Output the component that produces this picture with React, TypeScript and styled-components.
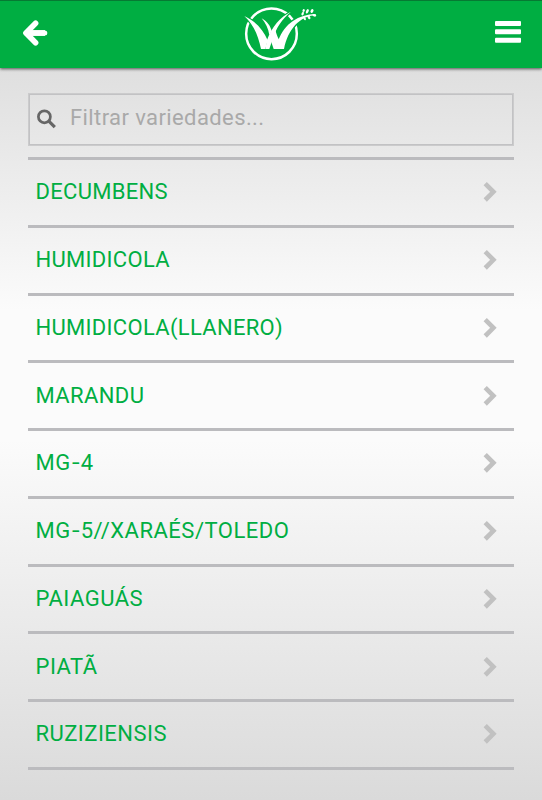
import React from "react";
import styled, { createGlobalStyle } from "styled-components";

const GlobalStyle = createGlobalStyle`
  * { box-sizing: border-box; }
  body { margin: 0; font-family: Roboto, "Liberation Sans", sans-serif; }
`;

const Screen = styled.div`
  display: flex;
  flex-direction: column;
  height: 800px;
  overflow: hidden;
  background: linear-gradient(to bottom, #dfdfdf 68px, #fbfbfb 310px, #fbfbfb 440px, #dadada 800px);
`;

const Header = styled.header`
  display: flex;
  flex: none;
  align-items: flex-start;
  justify-content: space-between;
  height: 68px;
  padding: 0 21px 0 22px;
  background: #00ae42;
  border-top: 1px solid #067a33;
  box-shadow: 0 1px 3px rgba(0, 0, 0, 0.65);
`;

const IconButton = styled.button`
  display: flex;
  padding: 18px 0 0;
  border: 0;
  background: none;
  color: #fff;
`;

const Logo = styled.svg`
  display: block;
  margin-left: 16px;
`;

const Content = styled.main`
  padding: 25px 28px 0;
`;

const Search = styled.label`
  display: flex;
  align-items: center;
  height: 53px;
  padding: 0 8px;
  border: 1px solid #cbcbcc;
  box-shadow: inset 0 0 0 1px #c2c2c4;
  color: #666;
`;

const SearchIcon = styled.svg`
  display: block;
  margin-bottom: 2px;
`;

const SearchInput = styled.input`
  flex: 1;
  min-width: 0;
  height: 30px;
  margin: 0 0 5px 14px;
  padding: 0;
  border: 0;
  outline: 0;
  background: none;
  color: #666;
  font: 400 22px Roboto, sans-serif;
  letter-spacing: 0.4px;
  &::placeholder { color: #a9a9a9; opacity: 1; }
`;

const List = styled.ul`
  margin: 11px 0 0;
  padding: 0;
  list-style: none;
  border-top: 3px solid #bbbbbe;
`;

const Row = styled.li`
  display: flex;
  align-items: center;
  justify-content: space-between;
  height: 67.75px;
  padding: 0 17px 0 7.5px;
  border-bottom: 3px solid #bbbbbe;
  color: #00ae42;
`;

const Name = styled.span<{ $tracking?: number }>`
  font-size: 22px;
  line-height: 26px;
  letter-spacing: ${({ $tracking = 0.3 }) => $tracking}px;
`;

const Hyphen = styled.span`
  display: inline-block;
  width: 10px;
  text-align: center;
  transform: scaleX(1.25);
`;

const Chevron = styled.svg`
  display: block;
`;

const varieties: { name: string; tracking?: number }[] = [
  { name: "DECUMBENS" },
  { name: "HUMIDICOLA" },
  { name: "HUMIDICOLA(LLANERO)" },
  { name: "MARANDU", tracking: 0.4 },
  { name: "MG-4", tracking: 0.5 },
  { name: "MG-5//XARAÉS/TOLEDO", tracking: 0.5 },
  { name: "PAIAGUÁS", tracking: 0.5 },
  { name: "PIATÃ", tracking: 0.5 },
  { name: "RUZIZIENSIS", tracking: 0.45 },
];

const BackIcon = () => (
  <svg width="26" height="28" viewBox="0 0 26 28" fill="none" stroke="currentColor">
    <path d="M13.6 4.3 4 14l9.6 9.7" strokeWidth="5.6" strokeLinecap="round" strokeLinejoin="round" />
    <path d="M5 14h18" strokeWidth="5.8" />
    <path d="M4 14h18.8" strokeWidth="5" strokeLinecap="round" />
  </svg>
);

const MenuIcon = () => (
  <svg width="26" height="26" viewBox="0 0 26 26" fill="currentColor">
    <rect y="2" width="26" height="5" rx="1" />
    <rect y="10.3" width="26" height="5" rx="1" />
    <rect y="18.8" width="26" height="5" rx="1" />
  </svg>
);

const leaves = [
  "M28 48C62 64 84 88 98 121L91 147H78C69 104 55 73 28 48Z",
  "M168 35C135 52 112 78 96 120L91 147H103L113 117C125 81 141 57 168 35Z",
  "M242 42C190 44 150 69 130 121L124 147H147C159 88 193 49 242 45Z",
];

const BrandLogo = () => (
  <Logo width="90" height="66" viewBox="0 3 270 198" fill="#fff">
    <circle cx="109.5" cy="101.5" r="76" fill="none" stroke="#fff" strokeWidth="7.5" />
    {leaves.map((d) => <path key={d} d={d} fill="none" stroke="#00ae42" strokeWidth="7" />)}
    {leaves.map((d) => <path key={d} d={d} />)}
    <path d="m112 103 9-14c3 12 7 24 12 31l4 27h-21l-9-26Z" />
    <path d="M80 55C96 64 107 78 110 94L103 105C100 86 92 69 80 55Z" />
    <g>
      <ellipse cx="203" cy="41" rx="5.5" ry="3.4" transform="rotate(-65 203 41)" />
      <ellipse cx="206" cy="31.5" rx="4.5" ry="3.4" transform="rotate(-65 206 31.5)" />
      <ellipse cx="217" cy="34" rx="7" ry="3.8" transform="rotate(-65 217 34)" />
      <ellipse cx="231" cy="33" rx="6" ry="4" transform="rotate(-60 231 33)" />
      <ellipse cx="222" cy="52" rx="6" ry="3.8" transform="rotate(60 222 52)" />
      <ellipse cx="238" cy="46" rx="6" ry="3.7" transform="rotate(15 238 46)" />
      <ellipse cx="209" cy="56" rx="5" ry="3.2" transform="rotate(55 209 56)" />
    </g>
  </Logo>
);

const renderName = (name: string) =>
  name.split("-").map((part, i) => (
    <React.Fragment key={i}>
      {i > 0 && <Hyphen>-</Hyphen>}
      {part}
    </React.Fragment>
  ));

export default function App() {
  return (
    <>
      <GlobalStyle />
      <Screen>
        <Header>
          <IconButton aria-label="Voltar"><BackIcon /></IconButton>
          <BrandLogo />
          <IconButton aria-label="Menu"><MenuIcon /></IconButton>
        </Header>
        <Content>
          <Search>
            <SearchIcon width="19" height="20" viewBox="0 0 19 20" fill="none" stroke="currentColor">
              <circle cx="7.4" cy="7.8" r="6" strokeWidth="2.7" />
              <path d="m11.8 12.2 6 6" strokeWidth="3.2" />
            </SearchIcon>
            <SearchInput placeholder="Filtrar variedades..." />
          </Search>
          <List>
            {varieties.map(({ name, tracking }) => (
              <Row key={name}>
                <Name $tracking={tracking}>{renderName(name)}</Name>
                <Chevron width="14" height="22" viewBox="0 0 14 22" fill="none" stroke="#c1c1c1" strokeWidth="4.6">
                  <path d="m2.2 2.6 8.2 8.2-8.2 8.2" />
                </Chevron>
              </Row>
            ))}
          </List>
        </Content>
      </Screen>
    </>
  );
}
